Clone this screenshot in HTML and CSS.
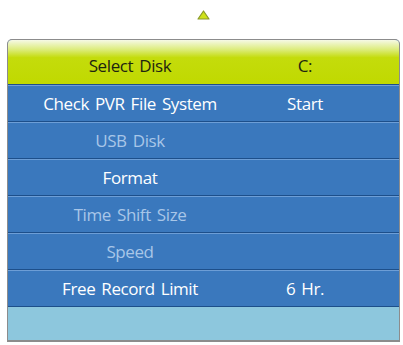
FILE: index.html
```html
<!DOCTYPE html>
<html lang="en">
<head>
    <meta charset="UTF-8">
    <title>PVR File System</title>
    <link rel="stylesheet" href="styles.css">
</head>
<body>

    <div class="screen">
        <div class="arrow-up">
            <svg width="13" height="10" viewBox="0 0 13 10">
                <path d="M6.5 1 L12 9 L1 9 Z" fill="#cfe21a" stroke="#8a9a2a" stroke-width="1.2" stroke-linejoin="round"/>
            </svg>
        </div>

        <div class="menu">
            <div class="row head">
                <span class="label">Select Disk</span>
                <span class="value">C:</span>
            </div>
            <div class="row">
                <span class="label">Check PVR File System</span>
                <span class="value">Start</span>
            </div>
            <div class="row off">
                <span class="label">USB Disk</span>
                <span class="value"></span>
            </div>
            <div class="row">
                <span class="label">Format</span>
                <span class="value"></span>
            </div>
            <div class="row off">
                <span class="label">Time Shift Size</span>
                <span class="value"></span>
            </div>
            <div class="row off">
                <span class="label">Speed</span>
                <span class="value"></span>
            </div>
            <div class="row">
                <span class="label">Free Record Limit</span>
                <span class="value">6 Hr.</span>
            </div>
            <div class="foot"></div>
        </div>
    </div>

</body>
</html>
```

FILE: styles.css
```css
/* Reset */
* {
    box-sizing: border-box;
    margin: 0;
    padding: 0;
}

body {
    font-family: "Open Sans", "Noto Sans", sans-serif;
    background-color: #ffffff;
    width: 403px;
    height: 345px;
    overflow: hidden;
}

.screen {
    padding-left: 7px;
}

/* Little up arrow above the menu */
.arrow-up {
    width: 393px;
    height: 39px;
    display: flex;
    justify-content: center;
    padding-top: 10px;
}

/* Menu box */
.menu {
    width: 393px;
    border: 1px solid #8c8c8c;
    border-bottom-width: 2px;
    border-radius: 5px 5px 0 0;
    overflow: hidden;
    background-color: #3a78bd;
}

.row {
    display: grid;
    grid-template-columns: 244px 106px 1fr;
    align-items: center;
    height: 37px;
    border-top: 1px solid #1d4f8a;
    box-shadow: inset 0 1px 0 #6d9ed6;
    color: #ffffff;
    font-size: 17px;
    letter-spacing: -0.4px;
    word-spacing: 2px;
}

.row .label,
.row .value {
    text-align: center;
    padding-top: 1px;
}

.row.off {
    color: #a8c6e8;
}

/* Highlighted top row */
.row.head {
    height: 44px;
    border-top: none;
    box-shadow: none;
    color: #1e2410;
    background: linear-gradient(to bottom, #f6f9e6 0%, #dcec7a 22%, #c4dc0c 40%, #c0d900 100%);
    padding-top: 6px;
}

.foot {
    height: 34px;
    border-top: 1px solid #1d4f8a;
    background-color: #8dc7dd;
}
```
